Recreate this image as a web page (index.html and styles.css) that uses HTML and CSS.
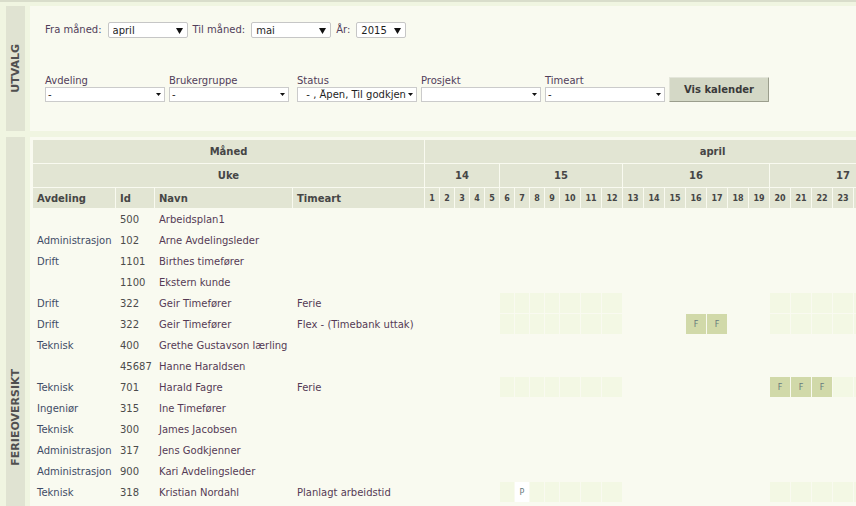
FILE: index.html
```html
<!DOCTYPE html>
<html lang="no">
<head>
<meta charset="utf-8">
<title>Ferieoversikt</title>
<link rel="stylesheet" href="styles.css">
</head>
<body>
<div class="page">
  <section class="section sec-utvalg">
    <div class="side"><span class="side-label">UTVALG</span></div>
    <div class="panel filters">
      <div class="row1">
        <span class="lbl">Fra måned:</span>
        <div class="sel sel-big sel-month"><span class="val">april</span><svg class="arr-big" width="7" height="6" viewBox="0 0 7 6"><polygon points="0,0 7,0 3.5,6" fill="#111"/></svg></div>
        <span class="lbl">Til måned:</span>
        <div class="sel sel-big sel-month"><span class="val">mai</span><svg class="arr-big" width="7" height="6" viewBox="0 0 7 6"><polygon points="0,0 7,0 3.5,6" fill="#111"/></svg></div>
        <span class="lbl">År:</span>
        <div class="sel sel-big sel-year"><span class="val">2015</span><svg class="arr-big" width="7" height="6" viewBox="0 0 7 6"><polygon points="0,0 7,0 3.5,6" fill="#111"/></svg></div>
      </div>
      <div class="row2">
        <div class="fgroup">
          <span class="lbl">Avdeling</span>
          <div class="sel sel-small"><span class="val">-</span><svg class="arr-small" width="5" height="3" viewBox="0 0 5 3"><polygon points="0,0 5,0 2.5,3" fill="#111"/></svg></div>
        </div>
        <div class="fgroup">
          <span class="lbl">Brukergruppe</span>
          <div class="sel sel-small"><span class="val">-</span><svg class="arr-small" width="5" height="3" viewBox="0 0 5 3"><polygon points="0,0 5,0 2.5,3" fill="#111"/></svg></div>
        </div>
        <div class="fgroup fgroup-status">
          <span class="lbl">Status</span>
          <div class="sel sel-small"><span class="val">&nbsp;&nbsp;- , Åpen, Til godkjent, Godkjent</span><svg class="arr-small" width="5" height="3" viewBox="0 0 5 3"><polygon points="0,0 5,0 2.5,3" fill="#111"/></svg></div>
        </div>
        <div class="fgroup">
          <span class="lbl">Prosjekt</span>
          <div class="sel sel-small"><span class="val"></span><svg class="arr-small" width="5" height="3" viewBox="0 0 5 3"><polygon points="0,0 5,0 2.5,3" fill="#111"/></svg></div>
        </div>
        <div class="fgroup">
          <span class="lbl">Timeart</span>
          <div class="sel sel-small"><span class="val">-</span><svg class="arr-small" width="5" height="3" viewBox="0 0 5 3"><polygon points="0,0 5,0 2.5,3" fill="#111"/></svg></div>
        </div>
        <button class="btn" type="button">Vis kalender</button>
      </div>
    </div>
  </section>

  <section class="section sec-ferie">
    <div class="side"><span class="side-label">FERIEOVERSIKT</span></div>
    <div class="panel tablewrap">
      <table class="cal">
        <colgroup>
          <col class="c-avd"><col class="c-id"><col class="c-navn"><col class="c-time">
          <col class="c-d1"><col class="c-d1"><col class="c-d1"><col class="c-d1"><col class="c-d1"><col class="c-d1"><col class="c-d1"><col class="c-d1"><col class="c-d1">
          <col class="c-d2"><col class="c-d2"><col class="c-d2"><col class="c-d2"><col class="c-d2"><col class="c-d2"><col class="c-d2"><col class="c-d2"><col class="c-d2"><col class="c-d2"><col class="c-d2">
          <col class="c-d2"><col class="c-d2"><col class="c-d2"><col class="c-d2"><col class="c-d2"><col class="c-d2"><col class="c-d2"><col class="c-d2"><col class="c-d2"><col class="c-d2">
        </colgroup>
        <thead>
          <tr class="hr1">
            <th colspan="4" class="ctr">Måned</th>
            <th colspan="30" class="ctr">april</th>
          </tr>
          <tr class="hr1">
            <th colspan="4" class="ctr">Uke</th>
            <th colspan="5" class="ctr">14</th>
            <th colspan="7" class="ctr">15</th>
            <th colspan="7" class="ctr">16</th>
            <th colspan="7" class="ctr">17</th>
            <th colspan="4" class="ctr">18</th>
          </tr>
          <tr class="hr3">
            <th>Avdeling</th><th>Id</th><th>Navn</th><th>Timeart</th>
            <th class="day">1</th><th class="day">2</th><th class="day">3</th><th class="day">4</th><th class="day">5</th><th class="day">6</th><th class="day">7</th><th class="day">8</th><th class="day">9</th><th class="day">10</th>
            <th class="day">11</th><th class="day">12</th><th class="day">13</th><th class="day">14</th><th class="day">15</th><th class="day">16</th><th class="day">17</th><th class="day">18</th><th class="day">19</th><th class="day">20</th>
            <th class="day">21</th><th class="day">22</th><th class="day">23</th><th class="day">24</th><th class="day">25</th><th class="day">26</th><th class="day">27</th><th class="day">28</th><th class="day">29</th><th class="day">30</th>
          </tr>
        </thead>
        <tbody>
          <tr><td class="avd"></td><td class="id">500</td><td class="navn">Arbeidsplan1</td><td class="time"></td><td colspan="30"></td></tr>
          <tr><td class="avd">Administrasjon</td><td class="id">102</td><td class="navn">Arne Avdelingsleder</td><td class="time"></td><td colspan="30"></td></tr>
          <tr><td class="avd">Drift</td><td class="id">1101</td><td class="navn">Birthes timefører</td><td class="time"></td><td colspan="30"></td></tr>
          <tr><td class="avd"></td><td class="id">1100</td><td class="navn">Ekstern kunde</td><td class="time"></td><td colspan="30"></td></tr>
          <tr><td class="avd">Drift</td><td class="id">322</td><td class="navn">Geir Timefører</td><td class="time">Ferie</td>
            <td colspan="5"></td>
            <td class="w"></td><td class="w"></td><td class="w"></td><td class="w"></td><td class="w"></td><td class="w"></td><td class="w"></td>
            <td colspan="7"></td>
            <td class="w"></td><td class="w"></td><td class="w"></td><td class="w"></td><td class="w"></td><td class="w"></td><td class="w"></td>
            <td colspan="4"></td></tr>
          <tr><td class="avd">Drift</td><td class="id">322</td><td class="navn">Geir Timefører</td><td class="time">Flex - (Timebank uttak)</td>
            <td colspan="5"></td>
            <td class="w"></td><td class="w"></td><td class="w"></td><td class="w"></td><td class="w"></td><td class="w"></td><td class="w"></td>
            <td colspan="3"></td><td class="f">F</td><td class="f">F</td><td colspan="2"></td>
            <td class="w"></td><td class="w"></td><td class="w"></td><td class="w"></td><td class="w"></td><td class="w"></td><td class="w"></td>
            <td colspan="4"></td></tr>
          <tr><td class="avd">Teknisk</td><td class="id">400</td><td class="navn">Grethe Gustavson lærling</td><td class="time"></td><td colspan="30"></td></tr>
          <tr><td class="avd"></td><td class="id">45687</td><td class="navn">Hanne Haraldsen</td><td class="time"></td><td colspan="30"></td></tr>
          <tr><td class="avd">Teknisk</td><td class="id">701</td><td class="navn">Harald Fagre</td><td class="time">Ferie</td>
            <td colspan="5"></td>
            <td class="w"></td><td class="w"></td><td class="w"></td><td class="w"></td><td class="w"></td><td class="w"></td><td class="w"></td>
            <td colspan="7"></td>
            <td class="f">F</td><td class="f">F</td><td class="f">F</td><td class="w"></td><td class="w"></td><td class="w"></td><td class="w"></td>
            <td colspan="4"></td></tr>
          <tr><td class="avd">Ingeniør</td><td class="id">315</td><td class="navn">Ine Timefører</td><td class="time"></td><td colspan="30"></td></tr>
          <tr><td class="avd">Teknisk</td><td class="id">300</td><td class="navn">James Jacobsen</td><td class="time"></td><td colspan="30"></td></tr>
          <tr><td class="avd">Administrasjon</td><td class="id">317</td><td class="navn">Jens Godkjenner</td><td class="time"></td><td colspan="30"></td></tr>
          <tr><td class="avd">Administrasjon</td><td class="id">900</td><td class="navn">Kari Avdelingsleder</td><td class="time"></td><td colspan="30"></td></tr>
          <tr><td class="avd">Teknisk</td><td class="id">318</td><td class="navn">Kristian Nordahl</td><td class="time">Planlagt arbeidstid</td>
            <td colspan="5"></td>
            <td class="w"></td><td class="p">P</td><td class="w"></td><td class="w"></td><td class="w"></td><td class="w"></td><td class="w"></td>
            <td colspan="7"></td>
            <td class="w"></td><td class="w"></td><td class="w"></td><td class="w"></td><td class="w"></td><td class="w"></td><td class="w"></td>
            <td colspan="4"></td></tr>
        </tbody>
      </table>
    </div>
  </section>
</div>
</body>
</html>
```

FILE: styles.css
```css
html, body {
  margin: 0;
  padding: 0;
  overflow: hidden;
}

body {
  width: 856px;
  height: 504px;
  background: #f0f5e1;
  border-top: 2px solid #d9ddcb;
  font-family: "DejaVu Sans", Verdana, sans-serif;
  font-size: 10px;
  line-height: 12px;
  color: #4a4652;
}

.page {
  display: flex;
  flex-direction: column;
  gap: 6px;
  padding: 4px 0 0 6px;
}

.section {
  display: flex;
  gap: 5px;
}

.sec-ferie {
  min-height: 560px;
}

.side {
  flex: none;
  width: 19px;
  background: #e0e3d2;
  display: flex;
  align-items: center;
  justify-content: center;
}

.side-label {
  writing-mode: vertical-rl;
  transform: rotate(180deg);
  font-size: 11px;
  font-weight: bold;
  line-height: 19px;
  color: #505050;
  white-space: nowrap;
}

.panel {
  flex: 1;
  min-width: 0;
  background: #f9faf0;
}

/* ---------- filters ---------- */
.filters {
  padding: 16px 15px 29px;
}

.row1 {
  display: flex;
  align-items: center;
  gap: 5px;
  height: 16px;
}

.row1 .lbl {
  padding-right: 1px;
}

.lbl {
  color: #51405a;
  white-space: nowrap;
}

.sel {
  box-sizing: border-box;
  display: flex;
  align-items: center;
  background: #fff;
  border: 1px solid #c6c6c6;
  color: #1e1e1e;
  overflow: hidden;
}

.sel .val {
  flex: 1;
  min-width: 0;
  overflow: hidden;
  white-space: nowrap;
}

.sel svg {
  flex: none;
  display: block;
}

.sel-big {
  height: 16px;
  border-radius: 2px;
  padding: 1px 4px 0 4px;
}

.sel-month {
  width: 80px;
}

.sel-year {
  width: 50px;
}

.sel-small {
  width: 120px;
  height: 15px;
  padding: 0 3px 0 2px;
  border-color: #cbcbcb;
}

.sel-small .arr-small {
  margin-top: -1px;
  margin-left: 2px;
}

.row2 {
  display: flex;
  align-items: flex-end;
  gap: 4px;
  margin-top: 37px;
}

.fgroup {
  display: flex;
  flex-direction: column;
}

.fgroup .lbl {
  height: 12px;
}

.fgroup-status {
  margin-left: 4px;
}

.btn {
  box-sizing: border-box;
  width: 100px;
  height: 25px;
  margin: 0;
  padding: 0;
  background: #d4d8c6;
  border: 1px solid;
  border-color: #e4e6da #9b9e8d #9b9e8d #e4e6da;
  border-radius: 1px;
  font-family: inherit;
  font-size: 10px;
  font-weight: bold;
  color: #3a3a3a;
}

/* ---------- calendar table ---------- */
.tablewrap {
  padding: 2px 0 0 2px;
}

.cal {
  table-layout: fixed;
  width: 969px;
  border-collapse: separate;
  border-spacing: 1px;
}

.c-avd { width: 82px; }
.c-id { width: 38px; }
.c-navn { width: 137px; }
.c-time { width: 131px; }
.c-d1 { width: 14px; }
.c-d2 { width: 20px; }

.cal th {
  background: #e2e5d3;
  color: #464646;
  font-weight: bold;
  text-align: left;
  padding: 0 4px;
  white-space: nowrap;
  overflow: hidden;
}

.cal th.ctr {
  text-align: center;
}

.cal .hr1 {
  height: 23px;
}

.cal .hr3 {
  height: 20px;
}

.cal .hr3 th {
  padding-top: 2px;
}

.cal th.day {
  padding: 2px 0 0;
  text-align: center;
  font-size: 8px;
}

.cal tbody tr {
  height: 20px;
}

.cal td {
  padding: 2px 4px 0;
  white-space: nowrap;
  overflow: hidden;
}

.cal td.avd { color: #3f4c66; }
.cal td.id { color: #4c4c4c; }
.cal td.navn { color: #553a55; }
.cal td.time { color: #553a55; }

.cal td.w,
.cal td.f,
.cal td.p {
  padding: 2px 0 0;
  text-align: center;
  font-size: 8px;
  color: #67797c;
}

.cal td.w { background: #f3f8e4; }
.cal td.f { background: #d1d9a9; }
.cal td.p { background: #ffffff; }
```
